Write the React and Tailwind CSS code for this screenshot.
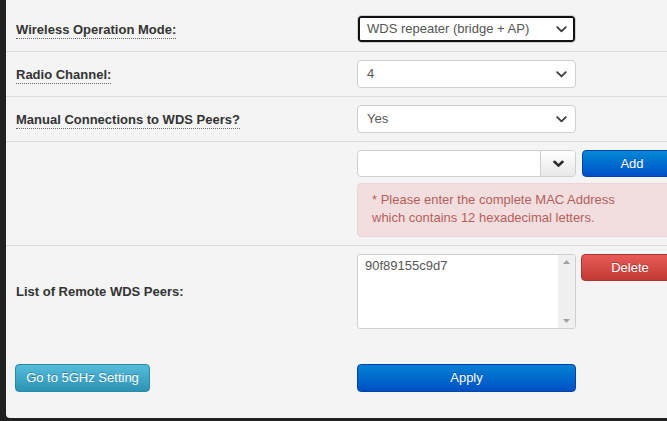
import React from "react";

function Chevron({ className = "" }) {
  return (
    <svg width="11" height="7" viewBox="0 0 11 7" className={className}>
      <path d="M1.2 1.2 L5.5 5.3 L9.8 1.2" fill="none" stroke="#3a3a3a" strokeWidth="1.8" strokeLinecap="round" strokeLinejoin="round" />
    </svg>
  );
}

function FakeSelect({ value, focused }) {
  return (
    <div
      className={
        "relative flex h-[28px] w-[219px] items-center justify-between rounded-[4px] border border-[#cfcfcf] bg-white pl-[9px] pr-[8px] text-[13px] text-[#555] " +
        (focused ? "shadow-[inset_0_0_0_2px_#111]" : "")
      }
    >
      <span>{value}</span>
      <Chevron />
    </div>
  );
}

function Label({ children }) {
  return (
    <span className="border-b border-dotted border-[#666] pb-[1px] text-[13px] font-bold leading-[15px] text-[#333]">
      {children}
    </span>
  );
}

export default function App() {
  return (
    <div
      className="h-[421px] w-[667px] overflow-hidden bg-[#202020] pb-[3px] pl-[6px]"
      style={{ fontFamily: '"Liberation Sans", Arial, sans-serif' }}
    >
      <div className="flex h-full w-[700px] flex-col rounded-bl-[4px] bg-[#f4f4f4]">
        {/* Row 1 */}
        <div className="grid grid-cols-[341px_1fr] items-center border-b border-[#dcdcdc] pb-[8px] pl-[10px] pt-[15px]">
          <div>
            <Label>Wireless Operation Mode:</Label>
          </div>
          <FakeSelect value="WDS repeater (bridge + AP)" focused />
        </div>
        {/* Row 2 */}
        <div className="grid grid-cols-[341px_1fr] items-center border-b border-[#dcdcdc] py-[8px] pl-[10px]">
          <div>
            <Label>Radio Channel:</Label>
          </div>
          <FakeSelect value="4" />
        </div>
        {/* Row 3 */}
        <div className="grid grid-cols-[341px_1fr] items-center border-b border-[#dcdcdc] py-[8px] pl-[10px]">
          <div>
            <Label>Manual Connections to WDS Peers?</Label>
          </div>
          <FakeSelect value="Yes" />
        </div>
        {/* Row 4 */}
        <div className="grid grid-cols-[341px_1fr] border-b border-[#dcdcdc] py-[8px] pl-[10px]">
          <div />
          <div className="flex flex-col gap-[6px]">
            <div className="flex items-start gap-[6px]">
              <div className="flex h-[27px] w-[219px] overflow-hidden rounded-[4px] border border-[#cfcfcf] bg-white">
                <div className="flex-1" />
                <div className="flex w-[35px] items-center justify-center border-l border-[#cfcfcf] bg-gradient-to-b from-white to-[#e8e8e8]">
                  <svg width="11" height="8" viewBox="0 0 11 8">
                    <path d="M1.5 1.8 L5.5 5.6 L9.5 1.8" fill="none" stroke="#2a2a2a" strokeWidth="2.6" strokeLinecap="round" strokeLinejoin="round" />
                  </svg>
                </div>
              </div>
              <div className="flex h-[27px] w-[100px] items-center justify-center rounded-[4px] border border-[#0044aa] bg-gradient-to-b from-[#0a88d6] to-[#0050c8] text-[13px] text-white [text-shadow:0_-1px_0_rgba(0,0,0,0.25)]">
                Add
              </div>
            </div>
            <div className="h-[54px] w-[330px] rounded-[4px] border border-[#eed3d7] bg-[#f2dede] px-[14px] pt-[7px] text-[13px] leading-[18px] text-[#b55f5d]">
              * Please enter the complete MAC Address
              <br />
              which contains 12 hexadecimal letters.
            </div>
          </div>
        </div>
        {/* Row 5 */}
        <div className="grid grid-cols-[341px_1fr] pl-[10px] pt-[8px]">
          <div className="flex items-center">
            <span className="text-[13px] font-bold text-[#333]">List of Remote WDS Peers:</span>
          </div>
          <div className="flex items-start gap-[5px]">
            <div className="flex h-[75px] w-[219px] overflow-hidden rounded-[3px] border border-[#cfcfcf] bg-white">
              <div className="flex-1 pl-[7px] pt-[3px] text-[13px] leading-[16px] text-[#555]">90f89155c9d7</div>
              <div className="flex w-[17px] flex-col items-center justify-between bg-[#f0f0f0] py-[5px]">
                <svg width="7" height="4" viewBox="0 0 7 4">
                  <path d="M0 4 L3.5 0 L7 4 Z" fill="#a3a3a3" />
                </svg>
                <svg width="7" height="4" viewBox="0 0 7 4">
                  <path d="M0 0 L3.5 4 L7 0 Z" fill="#a3a3a3" />
                </svg>
              </div>
            </div>
            <div className="flex h-[27px] w-[98px] items-center justify-center rounded-[4px] border border-[#b03530] bg-gradient-to-b from-[#e85a56] to-[#c13a33] text-[13px] text-white [text-shadow:0_-1px_0_rgba(0,0,0,0.25)]">
              Delete
            </div>
          </div>
        </div>
        {/* Buttons */}
        <div className="mt-[35px] grid grid-cols-[342px_1fr] pl-[9px]">
          <div>
            <div className="flex h-[28px] w-[135px] items-center justify-center rounded-[4px] border border-[#2a8aa8] bg-gradient-to-b from-[#55bcdc] to-[#2d93b3] text-[13px] text-white [text-shadow:0_-1px_0_rgba(0,0,0,0.25)]">
              Go to 5GHz Setting
            </div>
          </div>
          <div className="flex h-[28px] w-[219px] items-center justify-center rounded-[4px] border border-[#0044aa] bg-gradient-to-b from-[#0a80d4] to-[#0050c4] text-[13px] text-white [text-shadow:0_-1px_0_rgba(0,0,0,0.25)]">
            Apply
          </div>
        </div>
      </div>
    </div>
  );
}
